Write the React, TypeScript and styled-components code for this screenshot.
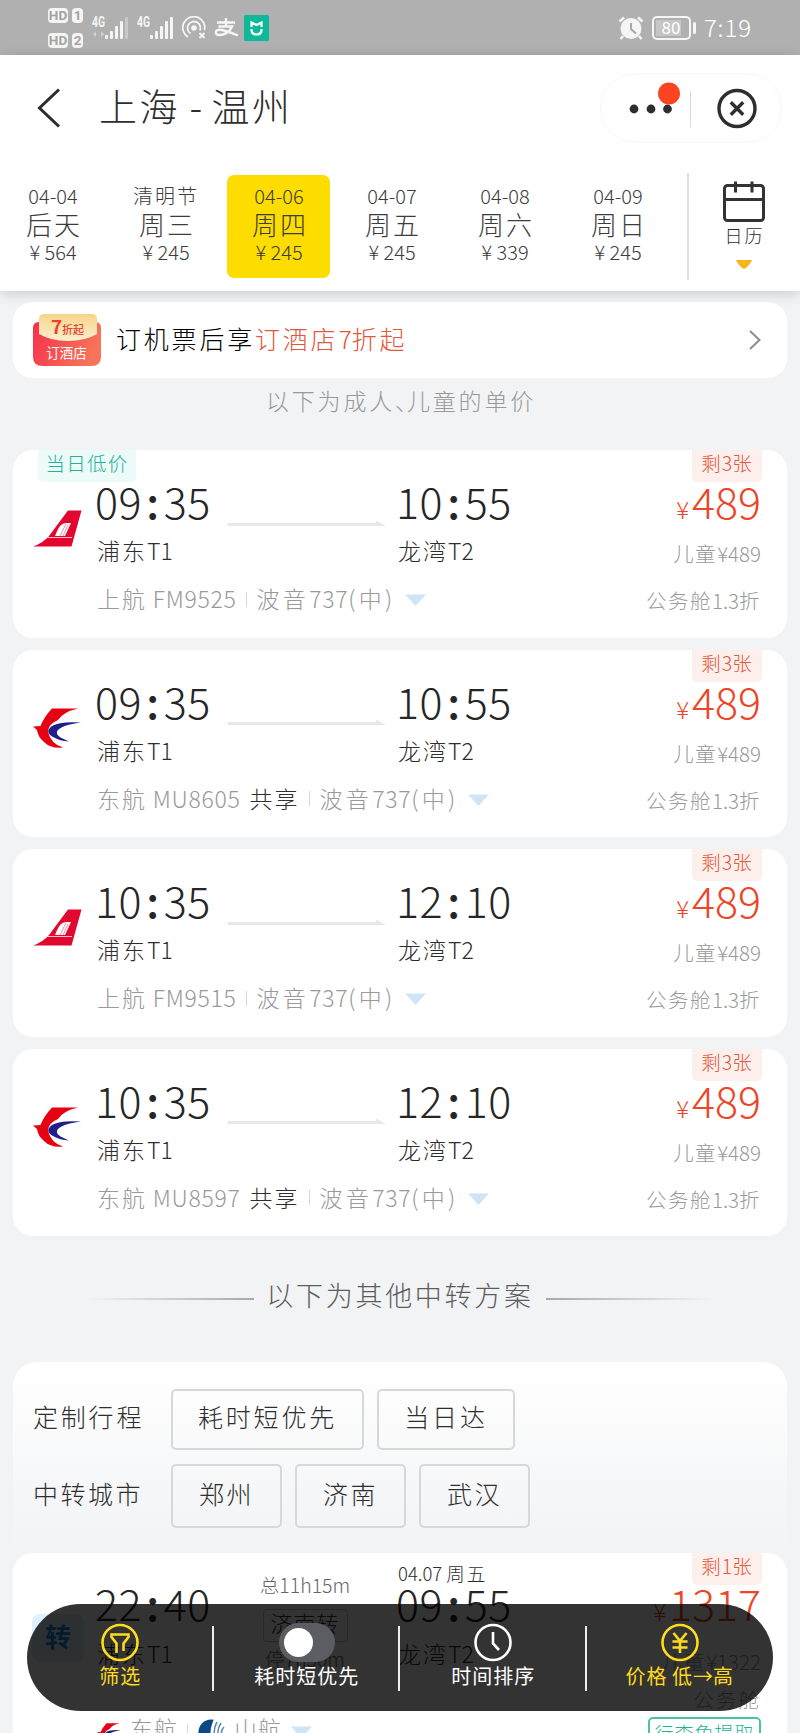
import React from 'react';
import styled, { createGlobalStyle } from 'styled-components';

const Global = createGlobalStyle`
  * { box-sizing: border-box; }
  body { margin: 0; background: #f2f3f5; }
`;

const Screen = styled.div`
  position: relative;
  width: 800px;
  height: 1733px;
  overflow: hidden;
  background: #f2f3f5;
  color: #2e2e2e;
  font-family: 'Noto Sans CJK SC', sans-serif;
  font-weight: 300;
  white-space: nowrap;
`;

/* ---------- text ---------- */

const Han = styled.span<{ $gap: number }>`
  letter-spacing: ${p => p.$gap}px;
`;

/* Chinese runs are tracked a little wider than digits and latin letters. */
const Mixed = ({ children, gap = 2 }: { children: string; gap?: number }) => (
  <span>
    {children.split(/([()\u3001\u4e00-\u9fff]+)/).map((part, i) =>
      i % 2 ? <Han key={i} $gap={gap}>{part}</Han> : part
    )}
  </span>
);

/* ---------- status bar ---------- */

const StatusBar = styled.div`
  display: flex;
  justify-content: space-between;
  height: 55px;
  padding: 0 48px;
  background: #b0b0b0;
  color: #fff;
`;

const StatusGroup = styled.div`
  display: flex;
  align-items: center;
`;

const HdColumn = styled.div`
  display: flex;
  flex-direction: column;
  gap: 10px;
  margin-right: 9px;
`;

const HdRow = styled.div`
  display: flex;
  gap: 4px;
`;

const HdChip = styled.span<{ $w: number }>`
  width: ${p => p.$w}px;
  height: 15px;
  border-radius: 4px;
  background: #f5f5f5;
  color: #a3a3a3;
  font: 700 13.5px/15.5px 'Roboto', sans-serif;
  text-align: center;
`;

const Clock = styled.span`
  margin-left: 7px;
  font-size: 24px;
  line-height: 53px;
  height: 55px;
  letter-spacing: 0.9px;
`;

const HdLabel = ({ n }: { n: string }) => (
  <HdRow>
    <HdChip $w={20}>HD</HdChip>
    <HdChip $w={11}>{n}</HdChip>
  </HdRow>
);

const StatusIcon = styled.svg<{ $ml?: number }>`
  display: block;
  flex: none;
  margin-left: ${p => p.$ml ?? 0}px;
`;

const NetLabel = styled.text`
  font: 700 14px 'Roboto', sans-serif;
`;

const Signal = ({ dim, ml }: { dim?: boolean; ml?: number }) => (
  <StatusIcon $ml={ml} width="38" height="26" viewBox="0 0 38 26" fill="#f5f5f5">
    <NetLabel x="0" y="12" textLength="13" lengthAdjust="spacingAndGlyphs">4G</NetLabel>
    {dim && <path d="M1 19l3-3v6zM9 16l3 3-3 3z" fill="#cfcfcf" />}
    <rect x="13" y="20" width="3" height="4" rx="1" />
    <rect x="18" y="16" width="3" height="8" rx="1" />
    <rect x="23" y="11" width="3" height="13" rx="1" />
    <rect x="28" y="6" width="3" height="18" rx="1" />
    <rect x="33" y="2" width="3" height="22" rx="1" fill={dim ? '#c8c8c8' : '#f5f5f5'} />
  </StatusIcon>
);

/* ---------- header ---------- */

const Header = styled.header`
  position: relative;
  z-index: 1;
  height: 236px;
  background: #fff;
  box-shadow: 0 3px 12px rgba(0, 0, 0, 0.16);
`;

const TitleRow = styled.div`
  display: flex;
  align-items: center;
  height: 106px;
  padding: 0 18px 0 37px;
`;

const Title = styled.h1`
  flex: 1;
  margin: 0 0 6px 38px;
  font-size: 38px;
  font-weight: 300;
  line-height: 50px;
  word-spacing: 1px;
`;

const Capsule = styled.div`
  display: flex;
  align-items: center;
  width: 182px;
  height: 70px;
  border: 1px solid #f7f7f7;
  border-radius: 35px;
`;

const DateRow = styled.div`
  display: flex;
  height: 130px;
  padding-top: 11px;
`;

const DateCell = styled.div<{ $active?: boolean }>`
  display: flex;
  flex-direction: column;
  align-items: center;
  width: 103px;
  height: 103px;
  margin: 3px 9px 0 1px;
  padding: 7px 0 0 1px;
  border-radius: 7px;
  background: ${p => (p.$active ? '#fddc00' : 'none')};
  color: #3c3c3c;
`;

const DateSmall = styled.span<{ $h: number }>`
  font-size: 20px;
  line-height: ${p => p.$h}px;
`;

const DateDay = styled.span`
  font-size: 26px;
  line-height: 28px;
  padding: 0 0 3px 2px;
`;

const Calendar = styled.div`
  display: flex;
  flex-direction: column;
  align-items: center;
  width: 113px;
  height: 107px;
  margin: 1px 0 0 auto;
  padding: 8px 2px 0 0;
  border-left: 2px solid #dedede;
`;

const CalendarText = styled.span`
  margin: 0 0 12px 2px;
  font-size: 18px;
  line-height: 26px;
`;

/* ---------- promo ---------- */

const Promo = styled.div`
  display: flex;
  align-items: center;
  height: 76px;
  margin: 11px 13px 0;
  padding: 0 26px 0 20px;
  border-radius: 20px;
  background: #fff;
`;

const PromoText = styled.div`
  flex: 1;
  margin: 0 0 5px 15px;
  font-size: 25px;
  line-height: 40px;
  color: #000;
`;

const Accent = styled.span`
  color: #e4573d;
`;

const Note = styled.p`
  margin: 0;
  height: 72px;
  padding-left: 2px;
  font-size: 23px;
  line-height: 45px;
  text-align: center;
  color: #999;
`;

const Comma = styled.span`
  letter-spacing: -11px;
`;

/* ---------- flights ---------- */

const List = styled.div`
  display: flex;
  flex-direction: column;
  gap: 12px;
  padding: 0 13px;
`;

const Card = styled.article`
  position: relative;
  display: grid;
  grid-template-columns: 84px 130px 171px 1fr auto;
  grid-template-rows: 47px 48px 48px;
  align-items: center;
  height: 187.5px;
  padding: 31px 26px 0 0;
  border-radius: 20px;
  background: #fff;
`;

const Badge = styled.span<{ $tone: 'red' | 'green' }>`
  position: absolute;
  top: 0;
  ${p => (p.$tone === 'red' ? 'right: 25px; width: 70px;' : 'left: 25px; width: 98px;')}
  height: 32px;
  border-radius: 0 0 5px 5px;
  background: ${p => (p.$tone === 'red' ? '#fdefec' : '#ecfaf8')};
  color: ${p => (p.$tone === 'red' ? '#e4573d' : '#1eb39b')};
  font-size: 19.5px;
  line-height: 25px;
  text-align: center;
`;

const LogoSlot = styled.div`
  grid-row: 1 / 3;
  padding: 5px 0 0 20px;
`;

const Time = styled.div`
  display: flex;
  height: 47px;
  margin-left: -2px;
  font-size: 43px;
  line-height: 39px;
  letter-spacing: 0.4px;
  color: #262626;
`;

const Colon = styled.b`
  width: 22px;
  text-align: center;
  font-weight: 500;
`;

const Station = styled.div<{ $col: number }>`
  grid-row: 2;
  grid-column: ${p => p.$col};
  font-size: 23px;
  line-height: 44px;
  height: 48px;
`;

const Price = styled.div`
  grid-column: 5;
  display: flex;
  align-items: baseline;
  justify-content: flex-end;
  font-size: 43px;
  line-height: 47px;
  color: #ee4528;
`;

const Yen = styled.span`
  font-size: 24px;
  margin-right: 3px;
`;

const Side = styled.div<{ $row: number }>`
  grid-column: 4 / 6;
  grid-row: ${p => p.$row};
  padding-top: ${p => (p.$row === 2 ? 2 : 0)}px;
  font-size: 20.5px;
  text-align: right;
  color: #999;
`;

const Detail = styled.div`
  grid-column: 2 / 5;
  grid-row: 3;
  display: flex;
  align-items: center;
  padding-bottom: 4px;
  font-size: 23px;
  line-height: 44px;
  letter-spacing: 0.7px;
  color: #999;
`;

const Shared = styled.span`
  margin-left: 9px;
  color: #2e2e2e;
`;

const Bar = styled.i`
  width: 1px;
  height: 15px;
  margin: 2px 10px 0 9px;
  background: #d8d8d8;
`;

const TriIcon = styled.svg`
  margin: 4px 0 0 9px;
`;

const Tri = () => (
  <TriIcon width="21" height="12" viewBox="0 0 21 12">
    <path d="M0 0.5h21L10.5 12z" fill="#cfe4f6" />
  </TriIcon>
);

const RouteLine = styled.svg`
  display: block;
  margin-top: 37px;
`;

const Route = () => (
  <RouteLine width="159" height="7" viewBox="0 0 159 7">
    <path d="M1 3H149V0.5L159 6H0z" fill="#e8e8e8" />
  </RouteLine>
);

const TailLogo = () => (
  <svg width="49" height="37" viewBox="0 0 49 37">
    <path d="M35 0.5H48.5L38.5 36.5H0Q10 33 16 26Z" fill="#e3062f" />
    <path d="M22 26q3-8 6-11q2-2 6-2h4l-6 13z" fill="#fff" />
    <path d="M27 26l6-12M30 26l5-11" stroke="#e8869a" strokeWidth="0.9" />
    <path d="M14 27.500h25" stroke="#f9c3cd" strokeWidth="1" />
  </svg>
);

const SwallowLogo = ({ w = 48, h = 40 }: { w?: number; h?: number }) => (
  <svg width={w} height={h} viewBox="0 0 48 40">
    <path d="M19 0.5H45Q30 4 25 12Q15 16 15 24Q18 36 30 39.5Q18 41 11 34Q5 29 4 22L0 18.5 7.5 18Q11 9 19 0.5z" fill="#e60012" />
    <path d="M48 14.5Q27 13 19 18Q11 24 20 29Q27 33 36 33.5Q25 29 24 26Q22 18 48 14.5z" fill="#1d1f8c" />
  </svg>
);

const TimeText = ({ value }: { value: string }) => {
  const [h, m] = value.split(':');
  return <Time>{h}<Colon>:</Colon>{m}</Time>;
};

type Flight = {
  dep: string; arr: string; airline: '上航' | '东航'; code: string; shared?: boolean; low?: boolean;
};

const flights: Flight[] = [
  { dep: '09:35', arr: '10:55', airline: '上航', code: 'FM9525', low: true },
  { dep: '09:35', arr: '10:55', airline: '东航', code: 'MU8605', shared: true },
  { dep: '10:35', arr: '12:10', airline: '上航', code: 'FM9515' },
  { dep: '10:35', arr: '12:10', airline: '东航', code: 'MU8597', shared: true },
];

const FlightCard = ({ f }: { f: Flight }) => (
  <Card>
    {f.low && <Badge $tone="green"><Mixed gap={1.3}>当日低价</Mixed></Badge>}
    <Badge $tone="red"><Mixed gap={1}>剩3张</Mixed></Badge>
    <LogoSlot>{f.airline === '上航' ? <TailLogo /> : <SwallowLogo />}</LogoSlot>
    <TimeText value={f.dep} />
    <Route />
    <TimeText value={f.arr} />
    <Price><Yen>¥</Yen>489</Price>
    <Station $col={2}><Mixed gap={2}>浦东T1</Mixed></Station>
    <Station $col={4}><Mixed gap={2}>龙湾T2</Mixed></Station>
    <Side $row={2}><Mixed gap={1.5}>儿童¥489</Mixed></Side>
    <Detail>
      <Mixed>{`${f.airline} ${f.code}`}</Mixed>
      {f.shared && <Shared><Mixed>共享</Mixed></Shared>}
      <Bar />
      <Mixed gap={3.3}>波音737(中)</Mixed>
      <Tri />
    </Detail>
    <Side $row={3}><Mixed gap={1.5}>公务舱1.3折</Mixed></Side>
  </Card>
);

/* ---------- transfer section ---------- */

const SectionTitle = styled.div`
  display: flex;
  align-items: center;
  justify-content: center;
  gap: 12px;
  height: 126px;
  padding-bottom: 10px;
  font-size: 27px;
  color: #5c5c5c;
`;

const Fade = styled.i<{ $to: 'left' | 'right' }>`
  width: 166px;
  height: 2px;
  margin-top: 9px;
  background: linear-gradient(to ${p => p.$to}, #a8a8a8, rgba(200, 200, 200, 0));
`;

const Panel = styled.section`
  display: flex;
  flex-direction: column;
  gap: 14px;
  height: 191px;
  margin: 0 13px;
  padding: 27px 20px 0;
  border-radius: 24px 24px 0 0;
  background: linear-gradient(#fff, #f2f3f5);
`;

const FilterRow = styled.div<{ $h: number }>`
  display: flex;
  gap: 13px;
  height: ${p => p.$h}px;
  font-size: 25px;
  line-height: ${p => p.$h - 6}px;
`;

const FilterLabel = styled.span`
  width: 125px;
`;

const Chip = styled.span<{ $w: number }>`
  width: ${p => p.$w}px;
  border: 2px solid #d6d8d9;
  border-radius: 5px;
  line-height: inherit;
  text-align: center;
  > span { display: block; margin-top: -2px; }
`;

const TransferCard = styled.article`
  position: relative;
  display: grid;
  grid-template-columns: 84px 130px 171px 1fr auto;
  grid-template-rows: 38px 64px 40px 70px;
  height: 240px;
  margin: 0 13px;
  padding: 7px 26px 0 0;
  border-radius: 20px;
  background: #fff;
`;

const TransferBadge = styled.div`
  width: 52px;
  height: 48px;
  margin: 54px 0 0 19px;
  border-radius: 8px;
  background: #dcf1fd;
  color: #1487d8;
  font-size: 26px;
  font-weight: 700;
  line-height: 44px;
  text-align: center;
`;

const Stack = styled.div`
  grid-row: 1 / 4;
  display: flex;
  flex-direction: column;
`;

const DayLabel = styled.span`
  height: 23px;
  font-size: 18.5px;
  line-height: 27px;
`;

const StackStation = styled.span`
  margin-top: 6px;
  font-size: 23px;
  line-height: 34px;
`;

const Via = styled(Stack)`
  align-items: center;
  width: 156px;
  padding-top: 12px;
  font-size: 19.5px;
  line-height: 26px;
  color: #666;
`;

const ViaBox = styled.span`
  width: 85px;
  height: 33px;
  margin: 11px 0 4px;
  border: 1px solid #c9c9c9;
  border-radius: 4px;
  color: #333;
  font-size: 22px;
  line-height: 25px;
  text-align: center;
`;

const RightStack = styled(Stack)`
  grid-column: 5;
  align-items: flex-end;
  padding-top: 19px;
  font-size: 20.5px;
  line-height: 34px;
  color: #999;
`;

const RightLine = styled.span<{ $mt: number }>`
  margin-top: ${p => p.$mt}px;
`;

const Airlines = styled.div`
  grid-column: 2 / 5;
  grid-row: 4;
  display: flex;
  align-items: center;
  height: 40px;
  margin-top: 8px;
  font-size: 23px;
  color: #999;
`;

const AirlineName = styled.span`
  margin: -4px 0 0 9px;
`;

const AirlineLogo = styled.span`
  display: flex;
  margin-top: 5px;
`;

const LuggageTag = styled.span`
  grid-column: 4 / 6;
  grid-row: 4;
  justify-self: end;
  width: 113px;
  height: 32px;
  margin-top: 15px;
  border: 2px solid #4cc0ab;
  border-radius: 5px;
  color: #1eb39b;
  font-size: 19px;
  line-height: 27px;
  text-align: center;
`;

/* ---------- bottom bar ---------- */

const SortBar = styled.nav`
  position: absolute;
  left: 27px;
  top: 1604px;
  display: grid;
  grid-template-columns: repeat(4, 1fr);
  width: 746px;
  height: 107px;
  padding-top: 22px;
  border-radius: 54px;
  background: rgba(0, 0, 0, 0.8);
`;

const SortItem = styled.div<{ $on?: boolean }>`
  display: flex;
  flex-direction: column;
  align-items: center;
  height: 65px;
  color: ${p => (p.$on ? '#fddc1c' : '#fff')};
  font-size: 20px;
  line-height: 26px;
  font-weight: 400;
  &:not(:first-child) { box-shadow: -2px 0 0 #eee; }
  > :first-child { margin-top: -3px; }
`;

const SortLabel = styled.span`
  margin-top: 1px;
`;

const Toggle = styled.span`
  flex: none;
  width: 56px;
  height: 39px;
  padding: 5px;
  border-radius: 20px;
  background: #5b5d63;
  &::after {
    content: '';
    display: block;
    width: 29px;
    height: 29px;
    border-radius: 50%;
    background: #fff;
  }
`;

const SortIcon = styled.svg`
  flex: none;
  fill: none;
  stroke: currentColor;
  stroke-width: 2.6;
`;

const dates: [string, string, string][] = [
  ['04-04', '后天', '564'],
  ['清明节', '周三', '245'],
  ['04-06', '周四', '245'],
  ['04-07', '周五', '245'],
  ['04-08', '周六', '339'],
  ['04-09', '周日', '245'],
];

export default function App() {
  return (
    <Screen>
      <Global />
      <StatusBar>
        <StatusGroup>
          <HdColumn><HdLabel n="1" /><HdLabel n="2" /></HdColumn>
          <Signal dim />
          <Signal ml={7} />
          <StatusIcon $ml={7} width="26" height="24" viewBox="0 0 26 24" fill="none" stroke="#f5f5f5" strokeWidth="1.8">
            <circle cx="12" cy="12" r="2.8" fill="#f5f5f5" stroke="none" />
            <path d="M8.500 17.500A6.500 6.500 0 1 1 18 14.500" />
            <path d="M6 21A11 11 0 1 1 22.500 14" />
            <path d="M17.500 17l5 5M22.500 17l-5 5" />
          </StatusIcon>
          <StatusIcon $ml={6} width="25" height="22" viewBox="0 0 25 22" fill="none" stroke="#f5f5f5" strokeWidth="2.4">
            <path d="M3 5.5H21M12 1V9.5M4.5 9.5H18Q15 16 9 17.5Q2 19 1.8 15.5Q2 12 8 13Q15 14.500 24 18.500" />
          </StatusIcon>
          <StatusIcon $ml={5} width="25" height="26" viewBox="0 0 25 26">
            <rect width="25" height="26" rx="1.5" fill="#10b89a" />
            <path d="M7.5 12V7.5L12.5 10L17.5 7.5V12M7.5 14V15.5Q8 19.5 12.5 19.5Q17 19.5 17.5 15.5V14" fill="none" stroke="#fff" strokeWidth="2.2" />
          </StatusIcon>
        </StatusGroup>
        <StatusGroup>
          <StatusIcon width="26" height="24" viewBox="0 0 26 24">
            <circle cx="13" cy="12.5" r="10.5" fill="#f5f5f5" />
            <path d="M13 7v6l5 4.5" fill="none" stroke="#a8a8a8" strokeWidth="2" />
            <path d="M1.5 5.5L6 1.5M20 1.5L24.5 5.5M5 20L2.5 23M21 20l2.5 3" stroke="#f5f5f5" strokeWidth="2.6" />
          </StatusIcon>
          <StatusIcon $ml={8} width="45" height="24" viewBox="0 0 45 24">
            <rect x="1" y="1" width="37" height="22" rx="4" fill="none" stroke="#f5f5f5" strokeWidth="2" />
            <rect x="4" y="4" width="25" height="16" fill="#c6c6c6" />
            <rect x="41" y="6" width="3" height="12" rx="1.5" fill="#f5f5f5" />
            <text x="19" y="17.5" textAnchor="middle" fontSize="17" fontWeight="400" fill="#fff">80</text>
          </StatusIcon>
          <Clock>7:19</Clock>
        </StatusGroup>
      </StatusBar>

      <Header>
        <TitleRow>
          <svg width="24" height="40" viewBox="0 0 24 40" fill="none" stroke="#2b2b2b" strokeWidth="3">
            <path d="M22 1.5L2.5 20L22 38.5" />
          </svg>
          <Title><Mixed gap={2.5}>上海 - 温州</Mixed></Title>
          <Capsule>
            <svg width="180" height="68" viewBox="0 0 180 68">
              <g fill="#2e2e2e">
                <circle cx="33" cy="35" r="4.4" /><circle cx="50" cy="35" r="4.4" /><circle cx="66.5" cy="35" r="4.4" />
              </g>
              <circle cx="68" cy="19.5" r="11" fill="#fc4420" />
              <path d="M89.500 17v36" stroke="#d8d8d8" />
              <circle cx="136" cy="34.5" r="18" fill="none" stroke="#2e2e2e" strokeWidth="3.4" />
              <path d="M129.800 28.300l12.400 12.400M142.200 28.300l-12.400 12.400" stroke="#2e2e2e" strokeWidth="3.4" />
            </svg>
          </Capsule>
        </TitleRow>
        <DateRow>
          {dates.map(([d, day, price]) => (
            <DateCell key={d} $active={d === '04-06'}>
              <DateSmall $h={28}><Mixed>{d}</Mixed></DateSmall>
              <DateDay><Mixed>{day}</Mixed></DateDay>
              <DateSmall $h={22}>¥ {price}</DateSmall>
            </DateCell>
          ))}
          <Calendar>
            <svg width="42" height="41" viewBox="0 0 42 41" fill="none" stroke="#333" strokeWidth="3">
              <rect x="1.5" y="4.5" width="39" height="35" rx="3" />
              <path d="M2 18.5H40M12.5 0.5V11.5M29 0.5V11.5" />
            </svg>
            <CalendarText><Mixed>日历</Mixed></CalendarText>
            <svg width="16" height="9" viewBox="0 0 16 9"><path d="M0 0H16Q15 3 10 8Q8 9.5 6 8Q1 3 0 0z" fill="#f7b51c" /></svg>
          </Calendar>
        </DateRow>
      </Header>

      <Promo>
        <svg width="68" height="53" viewBox="0 0 68 53">
          <defs>
            <linearGradient id="coupon" x1="0" y1="0" x2="1" y2="0.3">
              <stop offset="0" stopColor="#f5304a" /><stop offset="1" stopColor="#f7735a" />
            </linearGradient>
            <linearGradient id="paper" x1="0" y1="0" x2="0" y2="1">
              <stop offset="0" stopColor="#f8d48a" /><stop offset="1" stopColor="#fdf0cf" />
            </linearGradient>
          </defs>
          <path d="M0 14Q0 8 6 8H62Q68 8 68 14V43Q68 52 58 52H10Q0 52 0 43z" fill="url(#coupon)" />
          <path d="M6 5Q6 0 11 0H59Q64 0 64 5V20Q52 27 35 27Q18 27 6 20z" fill="url(#paper)" />
          <text x="18" y="19.5" fontSize="19" fontWeight="700" fill="#e8442c">7</text>
          <text x="29" y="19.5" fontSize="11" fontWeight="500" fill="#e8442c">折起</text>
          <text x="33.5" y="44" fontSize="13.5" fontWeight="400" fill="#fff" textAnchor="middle">订酒店</text>
        </svg>
        <PromoText><Mixed gap={2.8}>订机票后享</Mixed><Accent><Mixed gap={2.8}>订酒店7折起</Mixed></Accent></PromoText>
        <svg width="12" height="20" viewBox="0 0 12 20" fill="none" stroke="#8c8c8c" strokeWidth="2"><path d="M1 1l9.500 9L1 19" /></svg>
      </Promo>
      <Note><Mixed gap={2.8}>以下为成人</Mixed><Comma>、</Comma><Mixed gap={2.8}>儿童的单价</Mixed></Note>

      <List>
        {flights.map(f => <FlightCard key={f.code} f={f} />)}
      </List>

      <SectionTitle>
        <Fade $to="left" />
        <Mixed gap={2.7}>以下为其他中转方案</Mixed>
        <Fade $to="right" />
      </SectionTitle>

      <Panel>
        <FilterRow $h={61}>
          <FilterLabel><Mixed gap={2.8}>定制行程</Mixed></FilterLabel>
          <Chip $w={193}><Mixed gap={2.8}>耗时短优先</Mixed></Chip>
          <Chip $w={138}><Mixed gap={2.8}>当日达</Mixed></Chip>
        </FilterRow>
        <FilterRow $h={64}>
          <FilterLabel><Mixed gap={2.5}>中转城市</Mixed></FilterLabel>
          <Chip $w={111}><Mixed gap={2.6}>郑州</Mixed></Chip>
          <Chip $w={111}><Mixed gap={2.6}>济南</Mixed></Chip>
          <Chip $w={111}><Mixed gap={2.6}>武汉</Mixed></Chip>
        </FilterRow>
      </Panel>

      <TransferCard>
        <Badge $tone="red"><Mixed gap={1}>剩1张</Mixed></Badge>
        <Stack><TransferBadge>转</TransferBadge></Stack>
        <Stack>
          <DayLabel />
          <TimeText value="22:40" />
          <StackStation><Mixed>浦东T1</Mixed></StackStation>
        </Stack>
        <Via>
          <Mixed gap={0}>总11h15m</Mixed>
          <ViaBox><Mixed gap={1}>济南转</Mixed></ViaBox>
          <Mixed gap={0}>停7h30m</Mixed>
        </Via>
        <Stack>
          <DayLabel><Mixed>04.07 周五</Mixed></DayLabel>
          <TimeText value="09:55" />
          <StackStation><Mixed>龙湾T2</Mixed></StackStation>
        </Stack>
        <RightStack>
          <Price><Yen>¥</Yen>1317</Price>
          <RightLine $mt={10}><Mixed>儿童¥1322</Mixed></RightLine>
          <RightLine $mt={4}><Mixed>公务舱</Mixed></RightLine>
        </RightStack>
        <Airlines>
          <AirlineLogo><SwallowLogo w={24} h={20} /></AirlineLogo>
          <AirlineName><Mixed gap={1}>东航</Mixed></AirlineName>
          <Bar />
          <AirlineLogo>
            <svg width="27" height="27" viewBox="0 0 27 27">
              <circle cx="13" cy="13" r="12.5" fill="#0b4a86" />
              <path d="M16 0H27V27H17Q11 18 13 9Q14 4 16 0z" fill="#fff" />
              <path d="M19 3Q14 11 18 22M23 4Q18 11 21 20M26 8Q22 12 24 18" fill="none" stroke="#5d86ad" strokeWidth="1.5" />
            </svg>
          </AirlineLogo>
          <AirlineName><Mixed gap={1}>山航</Mixed></AirlineName>
          <Tri />
        </Airlines>
        <LuggageTag><Mixed gap={1}>行李免提取</Mixed></LuggageTag>
      </TransferCard>

      <SortBar>
        <SortItem $on>
          <SortIcon width="38" height="39" viewBox="0 0 38 39">
            <circle cx="19" cy="19.5" r="17.5" />
            <path d="M15.500 30V20.500L10.500 14V11.500H27.500V14L22.500 20.500V28" />
          </SortIcon>
          <SortLabel><Mixed gap={1}>筛选</Mixed></SortLabel>
        </SortItem>
        <SortItem>
          <Toggle />
          <SortLabel><Mixed gap={1}>耗时短优先</Mixed></SortLabel>
        </SortItem>
        <SortItem>
          <SortIcon width="38" height="39" viewBox="0 0 38 39">
            <circle cx="19" cy="19.5" r="17.5" />
            <path d="M19 9V20.500L25 27" />
          </SortIcon>
          <SortLabel><Mixed gap={1}>时间排序</Mixed></SortLabel>
        </SortItem>
        <SortItem $on>
          <SortIcon width="38" height="39" viewBox="0 0 38 39">
            <circle cx="19" cy="19.5" r="17.5" />
            <path d="M12.500 10L19 18L25.500 10M19 18V30M11.500 18.500H26.500M11.500 24.500H26.500" />
          </SortIcon>
          <SortLabel><Mixed gap={1}>价格 低→高</Mixed></SortLabel>
        </SortItem>
      </SortBar>
    </Screen>
  );
}
